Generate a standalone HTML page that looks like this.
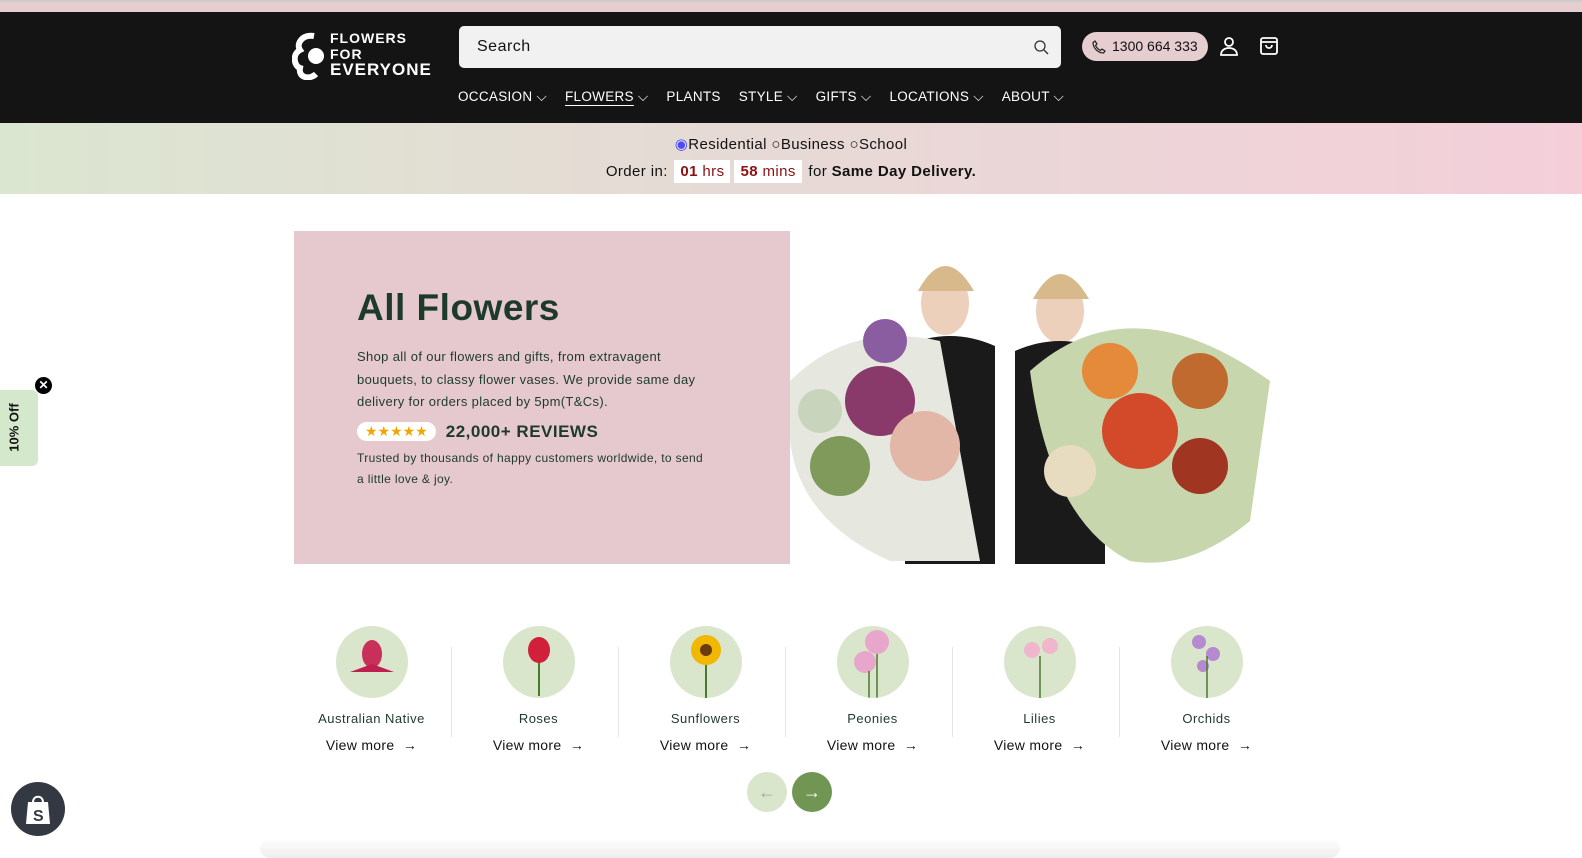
<!DOCTYPE html>
<html><head><meta charset="utf-8"><style>
*{box-sizing:border-box;margin:0;padding:0}
body{width:1582px;height:852px;overflow:hidden;background:#fff;font-family:"Liberation Sans",sans-serif;color:#121212;position:relative}
.top{height:12px;background:#e5cdd0;border-top:2px solid #ccc}
.hdr{height:111px;background:#141414;position:relative}
.logo{position:absolute;left:292px;top:18px;color:#fff;font-weight:bold;line-height:16px}
.search{position:absolute;left:459px;top:14px;width:602px;height:42px;background:#f1f1f1;border-radius:5px;font-size:16px;padding:12px 18px;color:#121212;letter-spacing:.5px}
.phone{position:absolute;left:1082px;top:20px;width:126px;height:29px;border-radius:15px;background:#e5cdd0;font-size:14px;padding:6px 0 0 30px}
nav{position:absolute;left:458px;top:77px;color:#fff;font-size:13.5px;display:flex;letter-spacing:.3px}
nav span{margin-right:18px}
.band{height:71px;background:linear-gradient(90deg,#dbe6d0,#e7d9d6 50%,#f4cfd9);text-align:center;font-size:15px;padding-top:12px;letter-spacing:.4px}
.band .b{display:inline-block;background:#fff;color:#8b1111;padding:3px 6px;margin:0 2px}
.hero{position:absolute;left:294px;top:231px;width:496px;height:333px;background:#e5c9ce;padding:56px 0 0 63px;color:#1e3a2b}
.hero h1{font-size:37px;margin-bottom:17px;letter-spacing:.5px}
.hero p{font-size:13px;line-height:22.5px;width:355px;letter-spacing:.35px}
.cat{position:absolute;top:626px;width:167px;text-align:center}
.circ{width:72px;height:72px;border-radius:50%;background:#d9e6cc;margin:0 auto;position:relative;overflow:hidden}
.cat .n{font-size:13px;color:#1e3a2b;margin-top:13px;letter-spacing:.5px}
.cat .v{font-size:14px;margin-top:11px;letter-spacing:.3px}
.sep{position:absolute;top:647px;width:1px;height:90px;background:#e5e5e5}
</style></head><body>
<div class="top"></div>
<div class="hdr">
 <div class="logo"><svg width="38" height="48" style="position:absolute;left:0;top:2px" viewBox="0 0 38 48"><path d="M22 4 C10 2 4 12 8 18 C0 22 2 34 8 36 C6 46 18 48 24 42" fill="none" stroke="#fff" stroke-width="6"/><circle cx="24" cy="24" r="8" fill="#fff"/></svg>
 <div style="margin-left:38px;font-size:14px;letter-spacing:1px">FLOWERS<br>FOR<br><span style="font-size:17px">EVERYONE</span></div></div>
 <div class="search">Search<svg style="position:absolute;right:12px;top:13px" width="16" height="16" viewBox="0 0 16 16"><circle cx="7" cy="7" r="5" fill="none" stroke="#333" stroke-width="1.3"/><path d="M11 11l4 4" stroke="#333" stroke-width="1.3"/></svg></div>
 <div class="phone"><svg style="position:absolute;left:10px;top:8px" width="14" height="14" viewBox="0 0 14 14"><path d="M3 1l2 3-1.5 1.5c1 2 3 4 5 5L10 9l3 2-1.5 2C6 13 1 8 1 2.5z" fill="none" stroke="#222" stroke-width="1.2"/></svg>1300 664 333</div>
 <svg style="position:absolute;left:1218px;top:23px" width="22" height="22" viewBox="0 0 22 22" fill="none" stroke="#fff" stroke-width="1.8"><circle cx="11" cy="7" r="4"/><path d="M3 20c0-5 4-7 8-7s8 2 8 7z"/></svg>
 <svg style="position:absolute;left:1258px;top:22px" width="22" height="22" viewBox="0 0 22 22" fill="none" stroke="#fff" stroke-width="1.8"><rect x="3" y="4" width="16" height="16" rx="2"/><path d="M3 8h16M8 11c0 4 6 4 6 0"/></svg>
 <nav><span>OCCASION ⌵</span><span style="text-decoration:underline;text-underline-offset:4px">FLOWERS</span><span style="margin-left:-14px">⌵</span><span>PLANTS</span><span>STYLE ⌵</span><span>GIFTS ⌵</span><span>LOCATIONS ⌵</span><span>ABOUT ⌵</span></nav>
</div>
<div class="band">
 <div><span style="color:#4b4bff">◉</span>Residential ○Business ○School</div>
 <div style="margin-top:7px">Order in: <span class="b"><b>01</b> hrs</span><span class="b"><b>58</b> mins</span> for <b>Same Day Delivery.</b></div>
</div>
<div class="hero">
 <h1>All Flowers</h1>
 <p>Shop all of our flowers and gifts, from extravagent bouquets, to classy flower vases. We provide same day delivery for orders placed by 5pm(T&amp;Cs).</p>
 <div style="margin-top:8px;display:flex;align-items:center"><span style="background:#fff;border-radius:10px;padding:1px 8px;color:#f0a800;font-size:14px">★★★★★</span><b style="font-size:17px;margin-left:10px;letter-spacing:.5px">22,000+ REVIEWS</b></div>
 <p style="font-size:12px;line-height:21px;margin-top:6px;width:350px">Trusted by thousands of happy customers worldwide, to send a little love &amp; joy.</p>
</div>
<svg style="position:absolute;left:790px;top:231px" width="495" height="333" viewBox="0 0 495 333">
 <ellipse cx="155" cy="72" rx="24" ry="32" fill="#ecd0bc"/><path d="M128 60 q27 -50 56 0" fill="#d8b98c"/>
 <ellipse cx="270" cy="80" rx="24" ry="32" fill="#ecd0bc"/><path d="M243 68 q27 -50 56 0" fill="#d8b98c"/>
 <path d="M115 115 q45 -20 90 0 v218 h-90z" fill="#1a1a1a"/>
 <path d="M225 120 q45 -20 90 0 v213 h-90z" fill="#1a1a1a"/>
 <path d="M0 150 q60 -60 150 -40 l40 220 h-90 q-90 -40 -100 -120z" fill="#e6e8e0"/>
 <circle cx="90" cy="170" r="35" fill="#8a3a6a"/><circle cx="135" cy="215" r="35" fill="#e2b7a8"/><circle cx="50" cy="235" r="30" fill="#7f9a5a"/><circle cx="95" cy="110" r="22" fill="#8a5da0"/><circle cx="30" cy="180" r="22" fill="#c9d4bc"/>
 <path d="M240 140 q100 -90 240 10 l-20 140 q-60 50 -120 40 q-80 -40 -100 -190z" fill="#c7d6ac"/>
 <circle cx="350" cy="200" r="38" fill="#d24a2a"/><circle cx="410" cy="150" r="28" fill="#c06a30"/><circle cx="320" cy="140" r="28" fill="#e58a3a"/><circle cx="410" cy="235" r="28" fill="#a03522"/><circle cx="280" cy="240" r="26" fill="#e8dcc0"/>
</svg>
<div class="cat" style="left:288px"><div class="circ"><svg width="72" height="72"><ellipse cx="36" cy="28" rx="10" ry="14" fill="#c8305a"/><path d="M14 46l22-8 22 8-22 0z" fill="#c02050"/></svg></div><div class="n">Australian Native</div><div class="v">View more &nbsp;→</div></div>
<div class="cat" style="left:455px"><div class="circ"><svg width="72" height="72"><path d="M36 35v35" stroke="#4a7a30" stroke-width="2"/><ellipse cx="36" cy="24" rx="11" ry="13" fill="#d0203a"/></svg></div><div class="n">Roses</div><div class="v">View more &nbsp;→</div></div>
<div class="cat" style="left:622px"><div class="circ"><svg width="72" height="72"><path d="M36 35v37" stroke="#4a7a30" stroke-width="2"/><circle cx="36" cy="24" r="15" fill="#f2b700"/><circle cx="36" cy="24" r="6" fill="#6a3a10"/></svg></div><div class="n">Sunflowers</div><div class="v">View more &nbsp;→</div></div>
<div class="cat" style="left:789px"><div class="circ"><svg width="72" height="72"><circle cx="40" cy="16" r="12" fill="#e8a6cc"/><circle cx="28" cy="36" r="11" fill="#e8a6cc"/><path d="M32 45v27M40 28v44" stroke="#4a7a30" stroke-width="1.5"/></svg></div><div class="n">Peonies</div><div class="v">View more &nbsp;→</div></div>
<div class="cat" style="left:956px"><div class="circ"><svg width="72" height="72"><circle cx="28" cy="24" r="8" fill="#f0b6cc"/><circle cx="46" cy="20" r="8" fill="#f0b6cc"/><path d="M36 30v42" stroke="#4a7a30" stroke-width="1.5"/></svg></div><div class="n">Lilies</div><div class="v">View more &nbsp;→</div></div>
<div class="cat" style="left:1123px"><div class="circ"><svg width="72" height="72"><circle cx="28" cy="16" r="7" fill="#b58ad0"/><circle cx="42" cy="28" r="7" fill="#b58ad0"/><circle cx="32" cy="40" r="6" fill="#b58ad0"/><path d="M36 30v42" stroke="#4a7a30" stroke-width="1.5"/></svg></div><div class="n">Orchids</div><div class="v">View more &nbsp;→</div></div>
<div class="sep" style="left:451px"></div><div class="sep" style="left:618px"></div><div class="sep" style="left:785px"></div><div class="sep" style="left:952px"></div><div class="sep" style="left:1119px"></div>
<div style="position:absolute;left:747px;top:772px;width:40px;height:40px;border-radius:50%;background:#d9e6cc;color:#9aa;text-align:center;line-height:40px;font-size:18px">←</div>
<div style="position:absolute;left:792px;top:772px;width:40px;height:40px;border-radius:50%;background:#719553;color:#fff;text-align:center;line-height:40px;font-size:18px">→</div>
<div style="position:absolute;left:260px;top:838px;width:1080px;height:20px;background:linear-gradient(#fff,#eee);border-radius:20px"></div>
<div style="position:absolute;left:0;top:390px;width:38px;height:76px;background:#d4e8cb;border-radius:0 6px 6px 0"><div style="position:absolute;left:-10px;top:30px;transform:rotate(-90deg);font-weight:bold;font-size:13px;white-space:nowrap">10% Off</div></div>
<div style="position:absolute;left:35px;top:377px;width:17px;height:17px;border-radius:50%;background:#000;color:#fff;font-size:12px;text-align:center;line-height:17px;font-weight:bold">✕</div>
<div style="position:absolute;left:11px;top:782px;width:54px;height:54px;border-radius:50%;background:#333842"><svg width="54" height="54" viewBox="0 0 54 54"><path d="M17 20h20l2 22h-24z" fill="#fff"/><path d="M22 20c0-7 10-7 10 0" stroke="#fff" stroke-width="2" fill="none"/><text x="22" y="39" font-size="16" font-weight="bold" fill="#333842" font-family="Liberation Sans">S</text></svg></div>
</body></html>
